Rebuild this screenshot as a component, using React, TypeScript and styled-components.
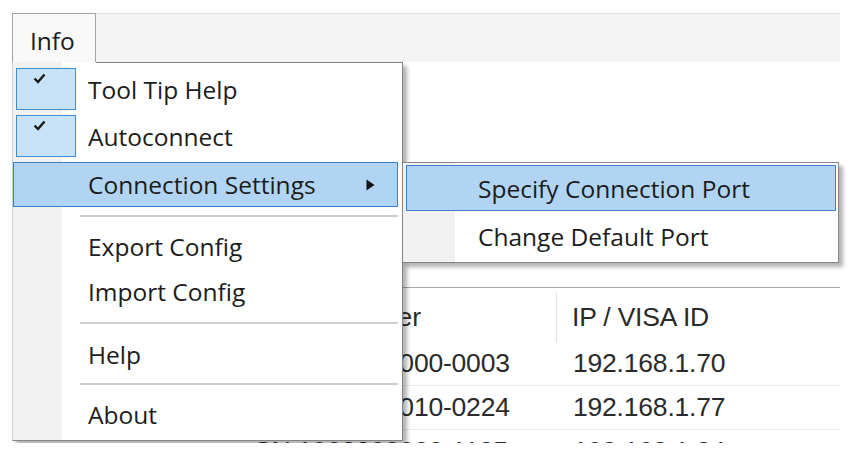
import React from 'react';
import styled, { createGlobalStyle } from 'styled-components';

const GlobalStyle = createGlobalStyle`
  * { box-sizing: border-box; }
  body {
    margin: 0;
    background: #ffffff;
  }
`;

const Screen = styled.div`
  width: 852px;
  height: 443px;
  overflow: hidden;
  padding: 13px 12px 0 12px;
  background: #ffffff;
`;

const Window = styled.div`
  position: relative;
  width: 828px;
  height: 100%;
  display: flex;
  flex-direction: column;
`;

const MenuBar = styled.div`
  height: 49px;
  flex: none;
  display: flex;
  background: #f4f4f4;
  border-top: 1px solid #e2e2e2;
`;

const MenuTab = styled.div`
  width: 84px;
  margin-top: -1px;
  display: flex;
  align-items: center;
  padding: 4px 0 0 17px;
  background: #f9f9f9;
  border: 1px solid #a3a3a3;
  border-bottom: none;
  font-family: 'Open Sans', 'Noto Sans', sans-serif;
  font-size: 24.5px;
  color: #1c1c1c;
`;

const Content = styled.div`
  flex: 1;
  background: #ffffff;
  padding: 225px 0 0 228px;
`;

const List = styled.div`
  border-top: 1px solid #a8a8a8;
  font-family: 'Liberation Sans', Arial, sans-serif;
  font-size: 26.5px;
  letter-spacing: -0.2px;
  color: #2a2a2a;
`;

const HeaderRow = styled.div`
  display: grid;
  grid-template-columns: 317px 1fr;
  height: 54px;
  padding-top: 4px;
`;

const HeaderCell = styled.div<{ $divider?: boolean }>`
  display: flex;
  align-items: center;
  padding-left: ${(p) => (p.$divider ? 14 : 15)}px;
  border-right: ${(p) => (p.$divider ? '1px solid #e2e2e2' : 'none')};
`;

const Row = styled.div`
  display: grid;
  grid-template-columns: 317px 1fr;
  height: 44px;
  border-bottom: 1px solid #ebebeb;
`;

const Cell = styled.div<{ $first?: boolean }>`
  display: flex;
  align-items: center;
  padding-left: ${(p) => (p.$first ? 14 : 16)}px;
  white-space: nowrap;
`;

const Dropdown = styled.div`
  position: absolute;
  left: 0;
  top: 49px;
  width: 391px;
  height: 379px;
  padding-top: 4px;
  background: linear-gradient(to right, #f1f1f1 0 49px, #ffffff 49px);
  border-left: 1px solid #cfcfcf;
  border-right: 1px solid #858585;
  border-bottom: 1px solid #858585;
  box-shadow: 4px 4px 4px rgba(0, 0, 0, 0.3);
  font-family: 'Open Sans', 'Noto Sans', sans-serif;
  font-size: 24.5px;
  color: #1c1c1c;

  &::before {
    content: '';
    position: absolute;
    top: 0;
    left: 83px;
    right: 0;
    height: 1px;
    background: #858585;
  }
`;

const SubMenu = styled.div`
  position: absolute;
  left: 390px;
  top: 149px;
  width: 437px;
  height: 101px;
  padding: 0 2px 0 3px;
  background: linear-gradient(to right, #f1f1f1 0 52px, #ffffff 52px);
  border: 1px solid #858585;
  box-shadow: 4px 4px 4px rgba(0, 0, 0, 0.3);
  font-family: 'Open Sans', 'Noto Sans', sans-serif;
  font-size: 24.5px;
  color: #1c1c1c;
`;

const MenuItem = styled.div<{ $h: number; $active?: boolean; $indent?: number }>`
  position: relative;
  height: ${(p) => p.$h}px;
  display: flex;
  align-items: center;
  padding-left: ${(p) => p.$indent ?? 75}px;
  white-space: nowrap;
  ${(p) =>
    p.$active &&
    `
    margin: 2px 4px 0 0;
    background: #b0d4f2;
    border: 1px solid #3a82c8;
  `}
`;

const SubItem = styled(MenuItem)`
  margin: 2px 0 0 0;
`;

const CheckBox = styled.span`
  position: absolute;
  left: 3px;
  top: 2px;
  width: 60px;
  height: 42px;
  background: #c8e2f7;
  border: 1px solid #3f8fd6;
  display: flex;
  align-items: flex-start;
  padding: 4px 0 0 16px;
`;

const Separator = styled.div<{ $h: number }>`
  height: ${(p) => p.$h}px;
  display: flex;
  align-items: center;
  padding: 0 4px 0 67px;

  &::after {
    content: '';
    flex: 1;
    height: 2px;
    background: #cfcfcf;
  }
`;

const Arrow = styled.svg`
  margin-left: auto;
  margin-right: 22px;
`;

const Check = () => (
  <svg width="13" height="11" viewBox="0 0 13 11">
    <path d="M1.5 5.5 L5 9 L11.5 1.5" fill="none" stroke="#1a1a1a" strokeWidth="2.4" />
  </svg>
);

const rows = [
  ['SN:1908802000-0003', '192.168.1.70'],
  ['SN:1908802010-0224', '192.168.1.77'],
  ['SN:1908802000-1125', '192.168.1.84'],
];

export default function App() {
  return (
    <Screen>
      <GlobalStyle />
      <Window>
        <MenuBar>
          <MenuTab>Info</MenuTab>
        </MenuBar>
        <Content>
          <List>
            <HeaderRow>
              <HeaderCell $divider>Serial Number</HeaderCell>
              <HeaderCell>IP / VISA ID</HeaderCell>
            </HeaderRow>
            {rows.map(([sn, ip]) => (
              <Row key={sn}>
                <Cell $first>{sn}</Cell>
                <Cell>{ip}</Cell>
              </Row>
            ))}
          </List>
        </Content>

        <Dropdown>
          <MenuItem $h={47}>
            <CheckBox><Check /></CheckBox>
            Tool Tip Help
          </MenuItem>
          <MenuItem $h={47}>
            <CheckBox><Check /></CheckBox>
            Autoconnect
          </MenuItem>
          <MenuItem $h={45} $active $indent={74}>
            Connection Settings
            <Arrow width="9" height="12" viewBox="0 0 9 12">
              <path d="M0.5 0.5 L8.5 6 L0.5 11.5 Z" fill="#111111" />
            </Arrow>
          </MenuItem>
          <Separator $h={17} />
          <MenuItem $h={45}>Export Config</MenuItem>
          <MenuItem $h={45}>Import Config</MenuItem>
          <Separator $h={18} />
          <MenuItem $h={44}>Help</MenuItem>
          <Separator $h={16} />
          <MenuItem $h={45}>About</MenuItem>
        </Dropdown>

        <SubMenu>
          <SubItem $h={46} $active $indent={71}>Specify Connection Port</SubItem>
          <SubItem $h={46} $indent={72}>Change Default Port</SubItem>
        </SubMenu>
      </Window>
    </Screen>
  );
}
